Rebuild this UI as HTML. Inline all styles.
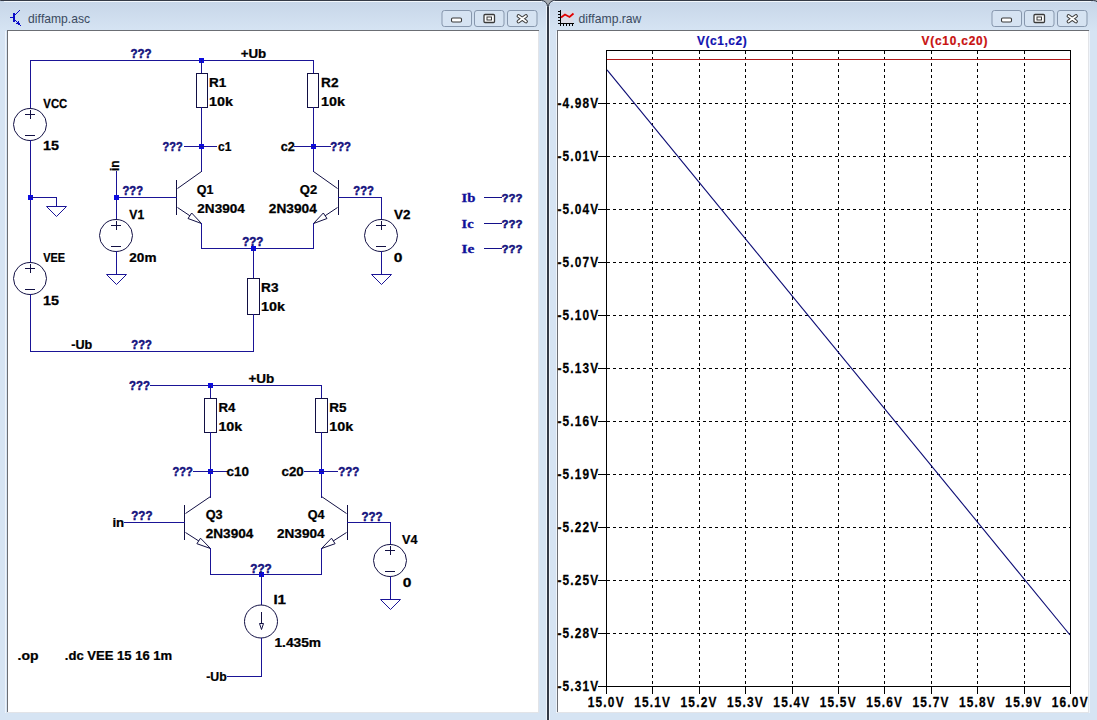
<!DOCTYPE html>
<html><head><meta charset="utf-8"><style>
html,body{margin:0;padding:0;width:1097px;height:720px;overflow:hidden;background:#d2e0f0}
svg text{font-kerning:none}
</style></head><body>
<svg width="1097" height="720" viewBox="0 0 1097 720" style="position:absolute;left:0;top:0">
<defs><linearGradient id="tg" gradientUnits="userSpaceOnUse" x1="0" y1="0" x2="0" y2="31"><stop offset="0" stop-color="#c6d5e8"/><stop offset="1" stop-color="#d6e4f3"/></linearGradient></defs>
<rect x="0" y="0" width="1097" height="720" fill="#a8acb2"/>
<rect x="-5.5" y="0.5" width="553" height="740" rx="6" fill="url(#tg)" stroke="#343a46" stroke-width="1"/>
<rect x="548.5" y="0.5" width="551" height="740" rx="6" fill="url(#tg)" stroke="#343a46" stroke-width="1"/>
<path d="M4,1.5 H542 M553,1.5 H1091" stroke="#f2f7fc" stroke-width="1"/>
<path d="M546.5,6 V720 M549.5,6 V720 M5.5,31 V713 M556.5,31 V713 M1089.5,31 V713" stroke="#eef4fb" stroke-width="1"/>
<rect x="7" y="30" width="532" height="683" fill="#ffffff"/>
<rect x="7" y="30" width="532" height="1" fill="#6b6e74"/>
<rect x="7" y="30" width="1" height="682" fill="#6b6e74"/>
<rect x="538" y="31" width="1" height="682" fill="#e2e4e8"/>
<rect x="7" y="712" width="532" height="1" fill="#e2e4e8"/>
<rect x="557" y="30" width="532" height="683" fill="#ffffff"/>
<rect x="557" y="30" width="532" height="1" fill="#6b6e74"/>
<rect x="557" y="30" width="1" height="682" fill="#6b6e74"/>
<rect x="1088" y="31" width="1" height="682" fill="#e2e4e8"/>
<rect x="557" y="712" width="532" height="1" fill="#e2e4e8"/>
<rect x="442.0" y="10.5" width="29.5" height="16" rx="2.5" fill="#d6e3f2" stroke="#8797ad" stroke-width="1"/>
<rect x="474.5" y="10.5" width="29.5" height="16" rx="2.5" fill="#d6e3f2" stroke="#8797ad" stroke-width="1"/>
<rect x="507.5" y="10.5" width="29.5" height="16" rx="2.5" fill="#d6e3f2" stroke="#8797ad" stroke-width="1"/>
<rect x="451.5" y="18" width="10" height="4" rx="1.2" fill="#fff" stroke="#3a3a3a" stroke-width="1.1"/>
<rect x="484" y="14.5" width="10.5" height="8" rx="1" fill="#fff" stroke="#3a3a3a" stroke-width="1.3"/><rect x="487" y="17" width="4.5" height="3" fill="#fff" stroke="#3a3a3a" stroke-width="1"/>
<path d="M518.5,16 L526,21.5 M526,16 L518.5,21.5" stroke="#3a3a3a" stroke-width="3.8" stroke-linecap="round"/><path d="M518.5,16 L526,21.5 M526,16 L518.5,21.5" stroke="#fff" stroke-width="1.7" stroke-linecap="round"/>
<rect x="992.0" y="10.5" width="29.5" height="16" rx="2.5" fill="#d6e3f2" stroke="#8797ad" stroke-width="1"/>
<rect x="1024.5" y="10.5" width="29.5" height="16" rx="2.5" fill="#d6e3f2" stroke="#8797ad" stroke-width="1"/>
<rect x="1057.5" y="10.5" width="29.5" height="16" rx="2.5" fill="#d6e3f2" stroke="#8797ad" stroke-width="1"/>
<rect x="1001.5" y="18" width="10" height="4" rx="1.2" fill="#fff" stroke="#3a3a3a" stroke-width="1.1"/>
<rect x="1034" y="14.5" width="10.5" height="8" rx="1" fill="#fff" stroke="#3a3a3a" stroke-width="1.3"/><rect x="1037" y="17" width="4.5" height="3" fill="#fff" stroke="#3a3a3a" stroke-width="1"/>
<path d="M1068.5,16 L1076,21.5 M1076,16 L1068.5,21.5" stroke="#3a3a3a" stroke-width="3.8" stroke-linecap="round"/><path d="M1068.5,16 L1076,21.5 M1076,16 L1068.5,21.5" stroke="#fff" stroke-width="1.7" stroke-linecap="round"/>
<text x="-0.50" y="0" transform="translate(28.60,22.70) scale(1.0093,1)" font-family="Liberation Sans" font-weight="normal" font-size="12" fill="#3a4a60">diffamp.asc</text>
<text x="-0.50" y="0" transform="translate(579.00,22.50) scale(1.0155,1)" font-family="Liberation Sans" font-weight="normal" font-size="12" fill="#3a4a60">diffamp.raw</text>
<rect x="13" y="13" width="2" height="9" fill="#0a0ac8"/>
<rect x="10" y="17" width="3" height="1" fill="#0a0ac8"/>
<rect x="15" y="14" width="1" height="1" fill="#0a0ac8"/>
<rect x="16" y="13" width="1" height="1" fill="#0a0ac8"/>
<rect x="17" y="12" width="1" height="1" fill="#0a0ac8"/>
<rect x="18" y="11" width="1" height="1" fill="#0a0ac8"/>
<rect x="19" y="10" width="1" height="1" fill="#0a0ac8"/>
<rect x="15" y="20" width="1" height="1" fill="#0a0ac8"/>
<rect x="16" y="21" width="1" height="1" fill="#0a0ac8"/>
<rect x="17" y="22" width="2" height="2" fill="#0a0ac8"/>
<rect x="18" y="23" width="2" height="2" fill="#0a0ac8"/>
<rect x="16" y="23" width="2" height="1" fill="#0a0ac8"/>
<rect x="18" y="21" width="1" height="1" fill="#0a0ac8"/>
<rect x="20" y="25" width="1" height="1" fill="#0a0ac8"/>
<rect x="561" y="11" width="12" height="12" fill="#e8d8dc" opacity="0.5"/>
<rect x="560" y="10" width="1" height="14" fill="#000"/><rect x="558" y="23" width="16" height="1" fill="#000"/>
<rect x="558" y="11" width="2" height="1" fill="#000"/>
<rect x="558" y="14" width="2" height="1" fill="#000"/>
<rect x="558" y="17" width="2" height="1" fill="#000"/>
<rect x="558" y="20" width="2" height="1" fill="#000"/>
<rect x="560" y="24" width="1" height="2" fill="#000"/>
<rect x="563" y="24" width="1" height="2" fill="#000"/>
<rect x="566" y="24" width="1" height="2" fill="#000"/>
<rect x="569" y="24" width="1" height="2" fill="#000"/>
<rect x="572" y="24" width="1" height="2" fill="#000"/>
<path d="M561,17.5 L565,14.5 L569.5,17 L573.5,13.5" fill="none" stroke="#e00000" stroke-width="1.8"/>
<rect x="30" y="60" width="284" height="1" fill="#1a1496"/>
<rect x="30" y="60" width="1" height="48" fill="#1a1496"/>
<ellipse cx="30" cy="124.5" rx="16.5" ry="16" fill="none" stroke="#121044" stroke-width="1"/>
<rect x="25" y="114" width="10" height="1" fill="#121044"/>
<rect x="30" y="110" width="1" height="9" fill="#121044"/>
<rect x="25" y="135" width="10" height="1" fill="#121044"/>
<rect x="30" y="140" width="1" height="123" fill="#1a1496"/>
<rect x="28" y="195" width="5" height="5" fill="#0c0ce0"/>
<rect x="30" y="197" width="27" height="1" fill="#1a1496"/>
<rect x="56" y="197" width="1" height="10" fill="#1a1496"/>
<polygon points="46.5,206.5 66.5,206.5 56.5,216.5" fill="none" stroke="#1a1496" stroke-width="1"/>
<ellipse cx="30" cy="278.5" rx="16.5" ry="16" fill="none" stroke="#121044" stroke-width="1"/>
<rect x="25" y="268" width="10" height="1" fill="#121044"/>
<rect x="30" y="264" width="1" height="9" fill="#121044"/>
<rect x="25" y="289" width="10" height="1" fill="#121044"/>
<rect x="30" y="294" width="1" height="58" fill="#1a1496"/>
<rect x="30" y="351" width="224" height="1" fill="#1a1496"/>
<rect x="199" y="58" width="5" height="5" fill="#0c0ce0"/>
<rect x="201" y="60" width="1" height="14" fill="#1a1496"/>
<rect x="196.5" y="73.5" width="11" height="34" fill="none" stroke="#121044" stroke-width="1"/>
<rect x="201" y="107" width="1" height="65" fill="#1a1496"/>
<rect x="199" y="144" width="5" height="5" fill="#0c0ce0"/>
<rect x="184" y="146" width="33" height="1" fill="#1a1496"/>
<rect x="313" y="60" width="1" height="14" fill="#1a1496"/>
<rect x="307.5" y="73.5" width="11" height="34" fill="none" stroke="#121044" stroke-width="1"/>
<rect x="313" y="107" width="1" height="65" fill="#1a1496"/>
<rect x="311" y="144" width="5" height="5" fill="#0c0ce0"/>
<rect x="294" y="146" width="37" height="1" fill="#1a1496"/>
<rect x="176" y="180" width="1" height="35" fill="#121044"/>
<line x1="177.5" y1="188.5" x2="201.5" y2="171.5" stroke="#121044" stroke-width="1"/>
<line x1="177.5" y1="207.5" x2="201.5" y2="223.5" stroke="#121044" stroke-width="1"/>
<polygon points="201.5,223.5 188.0,218.5 191.7,213.0" fill="#fff" stroke="#121044" stroke-width="1"/>
<rect x="116" y="197" width="61" height="1" fill="#1a1496"/>
<rect x="116" y="171" width="1" height="49" fill="#1a1496"/>
<rect x="114" y="195" width="5" height="5" fill="#0c0ce0"/>
<ellipse cx="116" cy="235.5" rx="16.5" ry="16" fill="none" stroke="#121044" stroke-width="1"/>
<rect x="111" y="225" width="10" height="1" fill="#121044"/>
<rect x="116" y="221" width="1" height="9" fill="#121044"/>
<rect x="111" y="246" width="10" height="1" fill="#121044"/>
<rect x="116" y="251" width="1" height="24" fill="#1a1496"/>
<polygon points="106.5,274.5 126.5,274.5 116.5,284.5" fill="none" stroke="#1a1496" stroke-width="1"/>
<rect x="201" y="223" width="1" height="26" fill="#1a1496"/>
<rect x="338" y="180" width="1" height="35" fill="#121044"/>
<line x1="337.5" y1="188.5" x2="313.5" y2="171.5" stroke="#121044" stroke-width="1"/>
<line x1="337.5" y1="207.5" x2="313.5" y2="223.5" stroke="#121044" stroke-width="1"/>
<polygon points="313.5,223.5 323.3,213.0 327.0,218.5" fill="#fff" stroke="#121044" stroke-width="1"/>
<rect x="338" y="197" width="44" height="1" fill="#1a1496"/>
<rect x="381" y="197" width="1" height="23" fill="#1a1496"/>
<ellipse cx="381" cy="235.5" rx="16.5" ry="16" fill="none" stroke="#121044" stroke-width="1"/>
<rect x="376" y="225" width="10" height="1" fill="#121044"/>
<rect x="381" y="221" width="1" height="9" fill="#121044"/>
<rect x="376" y="246" width="10" height="1" fill="#121044"/>
<rect x="381" y="251" width="1" height="24" fill="#1a1496"/>
<polygon points="371.5,274.5 391.5,274.5 381.5,284.5" fill="none" stroke="#1a1496" stroke-width="1"/>
<rect x="313" y="223" width="1" height="26" fill="#1a1496"/>
<rect x="201" y="248" width="113" height="1" fill="#1a1496"/>
<rect x="251" y="246" width="5" height="5" fill="#0c0ce0"/>
<rect x="253" y="248" width="1" height="31" fill="#1a1496"/>
<rect x="247.5" y="278.5" width="12" height="36" fill="none" stroke="#121044" stroke-width="1"/>
<rect x="253" y="314" width="1" height="38" fill="#1a1496"/>
<text x="-0.44" y="0" transform="translate(462.10,201.70) scale(1.1303,1)" font-family="Liberation Serif" font-weight="bold" font-size="13" fill="#10109a" stroke="#10109a" stroke-width="0.3">Ib</text>
<rect x="484" y="197" width="18" height="1" fill="#14108a"/>
<text x="-0.54" y="0" transform="translate(502.00,201.70) scale(0.9705,1)" font-family="Liberation Sans" font-weight="bold" font-size="11.8" fill="#14127e" stroke="#14127e" stroke-width="0.55">???</text>
<text x="-0.44" y="0" transform="translate(462.10,227.70) scale(1.1125,1)" font-family="Liberation Serif" font-weight="bold" font-size="13" fill="#10109a" stroke="#10109a" stroke-width="0.3">Ic</text>
<rect x="484" y="223" width="18" height="1" fill="#14108a"/>
<text x="-0.54" y="0" transform="translate(502.00,227.70) scale(0.9705,1)" font-family="Liberation Sans" font-weight="bold" font-size="11.8" fill="#14127e" stroke="#14127e" stroke-width="0.55">???</text>
<text x="-0.44" y="0" transform="translate(462.10,252.90) scale(1.1835,1)" font-family="Liberation Serif" font-weight="bold" font-size="13" fill="#10109a" stroke="#10109a" stroke-width="0.3">Ie</text>
<rect x="484" y="248" width="18" height="1" fill="#14108a"/>
<text x="-0.54" y="0" transform="translate(502.00,252.90) scale(0.9705,1)" font-family="Liberation Sans" font-weight="bold" font-size="11.8" fill="#14127e" stroke="#14127e" stroke-width="0.55">???</text>
<rect x="150" y="385" width="172" height="1" fill="#1a1496"/>
<rect x="208" y="383" width="5" height="5" fill="#0c0ce0"/>
<rect x="210" y="385" width="1" height="14" fill="#1a1496"/>
<rect x="204.5" y="398.5" width="12" height="34" fill="none" stroke="#121044" stroke-width="1"/>
<rect x="210" y="432" width="1" height="66" fill="#1a1496"/>
<rect x="208" y="469" width="5" height="5" fill="#0c0ce0"/>
<rect x="193" y="471" width="35" height="1" fill="#1a1496"/>
<rect x="321" y="385" width="1" height="14" fill="#1a1496"/>
<rect x="315.5" y="398.5" width="12" height="34" fill="none" stroke="#121044" stroke-width="1"/>
<rect x="321" y="432" width="1" height="66" fill="#1a1496"/>
<rect x="319" y="469" width="5" height="5" fill="#0c0ce0"/>
<rect x="304" y="471" width="34" height="1" fill="#1a1496"/>
<rect x="184" y="505" width="1" height="35" fill="#121044"/>
<line x1="185.5" y1="513.5" x2="210.5" y2="496.5" stroke="#121044" stroke-width="1"/>
<line x1="185.5" y1="532.5" x2="210.5" y2="548.5" stroke="#121044" stroke-width="1"/>
<polygon points="210.5,548.5 196.9,543.7 200.5,538.2" fill="#fff" stroke="#121044" stroke-width="1"/>
<rect x="124" y="522" width="61" height="1" fill="#1a1496"/>
<rect x="210" y="548" width="1" height="27" fill="#1a1496"/>
<rect x="347" y="505" width="1" height="35" fill="#121044"/>
<line x1="346.5" y1="513.5" x2="321.5" y2="496.5" stroke="#121044" stroke-width="1"/>
<line x1="346.5" y1="532.5" x2="321.5" y2="548.5" stroke="#121044" stroke-width="1"/>
<polygon points="321.5,548.5 331.5,538.2 335.1,543.7" fill="#fff" stroke="#121044" stroke-width="1"/>
<rect x="347" y="522" width="44" height="1" fill="#1a1496"/>
<rect x="390" y="522" width="1" height="23" fill="#1a1496"/>
<ellipse cx="390" cy="560.5" rx="16.5" ry="16" fill="none" stroke="#121044" stroke-width="1"/>
<rect x="385" y="550" width="10" height="1" fill="#121044"/>
<rect x="390" y="546" width="1" height="9" fill="#121044"/>
<rect x="385" y="571" width="10" height="1" fill="#121044"/>
<rect x="390" y="576" width="1" height="24" fill="#1a1496"/>
<polygon points="380.5,599.5 400.5,599.5 390.5,609.5" fill="none" stroke="#1a1496" stroke-width="1"/>
<rect x="321" y="548" width="1" height="27" fill="#1a1496"/>
<rect x="210" y="574" width="112" height="1" fill="#1a1496"/>
<rect x="259" y="572" width="5" height="5" fill="#0c0ce0"/>
<rect x="261" y="574" width="1" height="31" fill="#1a1496"/>
<ellipse cx="261" cy="621.5" rx="16.5" ry="16.5" fill="none" stroke="#121044" stroke-width="1"/>
<rect x="261" y="612" width="1" height="12" fill="#121044"/>
<polygon points="259.5,623.5 263.5,623.5 261.5,629.5" fill="#fff" stroke="#121044" stroke-width="1"/>
<rect x="261" y="638" width="1" height="39" fill="#1a1496"/>
<rect x="227" y="676" width="35" height="1" fill="#1a1496"/>
<text x="-0.09" y="0" transform="translate(43.40,107.50) scale(0.9089,1)" font-family="Liberation Sans" font-weight="bold" font-size="12.5" fill="#000" stroke="#000" stroke-width="0.25">VCC</text>
<text x="-0.79" y="0" transform="translate(43.80,150.40) scale(1.1513,1)" font-family="Liberation Sans" font-weight="bold" font-size="12.5" fill="#000" stroke="#000" stroke-width="0.25">15</text>
<text x="-0.09" y="0" transform="translate(43.30,261.60) scale(0.8757,1)" font-family="Liberation Sans" font-weight="bold" font-size="12.5" fill="#000" stroke="#000" stroke-width="0.25">VEE</text>
<text x="-0.79" y="0" transform="translate(43.80,304.80) scale(1.1513,1)" font-family="Liberation Sans" font-weight="bold" font-size="12.5" fill="#000" stroke="#000" stroke-width="0.25">15</text>
<text x="-0.52" y="0" transform="translate(241.20,57.90) scale(1.0687,1)" font-family="Liberation Sans" font-weight="bold" font-size="12.5" fill="#000" stroke="#000" stroke-width="0.25">+Ub</text>
<text x="-0.84" y="0" transform="translate(210.00,87.00) scale(1.0815,1)" font-family="Liberation Sans" font-weight="bold" font-size="12.5" fill="#000" stroke="#000" stroke-width="0.25">R1</text>
<text x="-0.79" y="0" transform="translate(210.00,106.00) scale(1.1454,1)" font-family="Liberation Sans" font-weight="bold" font-size="12.5" fill="#000" stroke="#000" stroke-width="0.25">10k</text>
<text x="-0.84" y="0" transform="translate(322.00,87.00) scale(1.0927,1)" font-family="Liberation Sans" font-weight="bold" font-size="12.5" fill="#000" stroke="#000" stroke-width="0.25">R2</text>
<text x="-0.79" y="0" transform="translate(322.00,106.00) scale(1.1454,1)" font-family="Liberation Sans" font-weight="bold" font-size="12.5" fill="#000" stroke="#000" stroke-width="0.25">10k</text>
<text x="-0.49" y="0" transform="translate(218.50,150.80) scale(0.9566,1)" font-family="Liberation Sans" font-weight="bold" font-size="12.5" fill="#000" stroke="#000" stroke-width="0.25">c1</text>
<text x="-0.49" y="0" transform="translate(281.30,150.80) scale(1.0066,1)" font-family="Liberation Sans" font-weight="bold" font-size="12.5" fill="#000" stroke="#000" stroke-width="0.25">c2</text>
<text x="-0.51" y="0" transform="translate(197.20,193.60) scale(0.9991,1)" font-family="Liberation Sans" font-weight="bold" font-size="12.5" fill="#000" stroke="#000" stroke-width="0.25">Q1</text>
<text x="-0.43" y="0" transform="translate(197.80,212.80) scale(1.0835,1)" font-family="Liberation Sans" font-weight="bold" font-size="12.5" fill="#000" stroke="#000" stroke-width="0.25">2N3904</text>
<text x="-0.51" y="0" transform="translate(300.40,193.60) scale(1.0408,1)" font-family="Liberation Sans" font-weight="bold" font-size="12.5" fill="#000" stroke="#000" stroke-width="0.25">Q2</text>
<text x="-0.43" y="0" transform="translate(269.30,212.80) scale(1.0950,1)" font-family="Liberation Sans" font-weight="bold" font-size="12.5" fill="#000" stroke="#000" stroke-width="0.25">2N3904</text>
<text x="-0.09" y="0" transform="translate(129.40,218.70) scale(0.9693,1)" font-family="Liberation Sans" font-weight="bold" font-size="12.5" fill="#000" stroke="#000" stroke-width="0.25">V1</text>
<text x="-0.43" y="0" transform="translate(129.80,261.80) scale(1.0836,1)" font-family="Liberation Sans" font-weight="bold" font-size="12.5" fill="#000" stroke="#000" stroke-width="0.25">20m</text>
<text x="-0.09" y="0" transform="translate(394.20,218.70) scale(1.0746,1)" font-family="Liberation Sans" font-weight="bold" font-size="12.5" fill="#000" stroke="#000" stroke-width="0.25">V2</text>
<text x="-0.49" y="0" transform="translate(394.30,261.70) scale(1.2448,1)" font-family="Liberation Sans" font-weight="bold" font-size="12.5" fill="#000" stroke="#000" stroke-width="0.25">0</text>
<text x="-0.84" y="0" transform="translate(262.00,292.20) scale(1.0891,1)" font-family="Liberation Sans" font-weight="bold" font-size="12.5" fill="#000" stroke="#000" stroke-width="0.25">R3</text>
<text x="-0.79" y="0" transform="translate(262.00,311.10) scale(1.1454,1)" font-family="Liberation Sans" font-weight="bold" font-size="12.5" fill="#000" stroke="#000" stroke-width="0.25">10k</text>
<text x="-0.49" y="0" transform="translate(71.75,348.75) scale(1.0089,1)" font-family="Liberation Sans" font-weight="bold" font-size="12.5" fill="#000" stroke="#000" stroke-width="0.25">-Ub</text>
<text x="0" y="0" font-family="Liberation Sans" font-weight="bold" font-size="12" fill="#000" transform="translate(119.3,171) rotate(-90)" stroke="#000" stroke-width="0.25">in</text>
<text x="-0.52" y="0" transform="translate(249.00,383.30) scale(1.0818,1)" font-family="Liberation Sans" font-weight="bold" font-size="12.5" fill="#000" stroke="#000" stroke-width="0.25">+Ub</text>
<text x="-0.84" y="0" transform="translate(219.30,412.20) scale(1.0613,1)" font-family="Liberation Sans" font-weight="bold" font-size="12.5" fill="#000" stroke="#000" stroke-width="0.25">R4</text>
<text x="-0.79" y="0" transform="translate(219.30,430.70) scale(1.1454,1)" font-family="Liberation Sans" font-weight="bold" font-size="12.5" fill="#000" stroke="#000" stroke-width="0.25">10k</text>
<text x="-0.84" y="0" transform="translate(330.20,412.00) scale(1.0815,1)" font-family="Liberation Sans" font-weight="bold" font-size="12.5" fill="#000" stroke="#000" stroke-width="0.25">R5</text>
<text x="-0.79" y="0" transform="translate(330.20,431.20) scale(1.1454,1)" font-family="Liberation Sans" font-weight="bold" font-size="12.5" fill="#000" stroke="#000" stroke-width="0.25">10k</text>
<text x="-0.49" y="0" transform="translate(227.00,475.50) scale(1.0778,1)" font-family="Liberation Sans" font-weight="bold" font-size="12.5" fill="#000" stroke="#000" stroke-width="0.25">c10</text>
<text x="-0.49" y="0" transform="translate(282.00,475.50) scale(1.0703,1)" font-family="Liberation Sans" font-weight="bold" font-size="12.5" fill="#000" stroke="#000" stroke-width="0.25">c20</text>
<text x="-0.87" y="0" transform="translate(113.30,526.70) scale(1.0570,1)" font-family="Liberation Sans" font-weight="bold" font-size="12.5" fill="#000" stroke="#000" stroke-width="0.25">in</text>
<text x="-0.51" y="0" transform="translate(206.20,518.60) scale(1.0184,1)" font-family="Liberation Sans" font-weight="bold" font-size="12.5" fill="#000" stroke="#000" stroke-width="0.25">Q3</text>
<text x="-0.43" y="0" transform="translate(206.20,538.20) scale(1.0881,1)" font-family="Liberation Sans" font-weight="bold" font-size="12.5" fill="#000" stroke="#000" stroke-width="0.25">2N3904</text>
<text x="-0.51" y="0" transform="translate(308.25,518.80) scale(1.0096,1)" font-family="Liberation Sans" font-weight="bold" font-size="12.5" fill="#000" stroke="#000" stroke-width="0.25">Q4</text>
<text x="-0.43" y="0" transform="translate(277.50,538.20) scale(1.0858,1)" font-family="Liberation Sans" font-weight="bold" font-size="12.5" fill="#000" stroke="#000" stroke-width="0.25">2N3904</text>
<text x="-0.09" y="0" transform="translate(402.20,543.90) scale(1.0108,1)" font-family="Liberation Sans" font-weight="bold" font-size="12.5" fill="#000" stroke="#000" stroke-width="0.25">V4</text>
<text x="-0.49" y="0" transform="translate(403.30,586.70) scale(1.2448,1)" font-family="Liberation Sans" font-weight="bold" font-size="12.5" fill="#000" stroke="#000" stroke-width="0.25">0</text>
<text x="-0.84" y="0" transform="translate(274.40,604.20) scale(1.2120,1)" font-family="Liberation Sans" font-weight="bold" font-size="12.5" fill="#000" stroke="#000" stroke-width="0.25">I1</text>
<text x="-0.79" y="0" transform="translate(275.30,647.20) scale(1.1021,1)" font-family="Liberation Sans" font-weight="bold" font-size="12.5" fill="#000" stroke="#000" stroke-width="0.25">1.435m</text>
<text x="-0.49" y="0" transform="translate(206.70,680.70) scale(0.9836,1)" font-family="Liberation Sans" font-weight="bold" font-size="12.5" fill="#000" stroke="#000" stroke-width="0.25">-Ub</text>
<text x="-0.85" y="0" transform="translate(18.50,660.00) scale(1.1160,1)" font-family="Liberation Sans" font-weight="bold" font-size="12.5" fill="#000" stroke="#000" stroke-width="0.25">.op</text>
<text x="-0.85" y="0" transform="translate(65.70,660.00) scale(1.0453,1)" font-family="Liberation Sans" font-weight="bold" font-size="12.5" fill="#000" stroke="#000" stroke-width="0.25">.dc VEE 15 16 1m</text>
<text x="-0.56" y="0" transform="translate(131.00,58.20) scale(0.9404,1)" font-family="Liberation Sans" font-weight="bold" font-size="12.3" fill="#14127e" stroke="#14127e" stroke-width="0.5">???</text>
<text x="-0.56" y="0" transform="translate(163.00,151.20) scale(0.8934,1)" font-family="Liberation Sans" font-weight="bold" font-size="12.3" fill="#14127e" stroke="#14127e" stroke-width="0.5">???</text>
<text x="-0.56" y="0" transform="translate(123.00,194.70) scale(0.9122,1)" font-family="Liberation Sans" font-weight="bold" font-size="12.3" fill="#14127e" stroke="#14127e" stroke-width="0.5">???</text>
<text x="-0.56" y="0" transform="translate(330.70,151.20) scale(0.9263,1)" font-family="Liberation Sans" font-weight="bold" font-size="12.3" fill="#14127e" stroke="#14127e" stroke-width="0.5">???</text>
<text x="-0.56" y="0" transform="translate(353.80,194.70) scale(0.9169,1)" font-family="Liberation Sans" font-weight="bold" font-size="12.3" fill="#14127e" stroke="#14127e" stroke-width="0.5">???</text>
<text x="-0.56" y="0" transform="translate(242.70,245.70) scale(0.9404,1)" font-family="Liberation Sans" font-weight="bold" font-size="12.3" fill="#14127e" stroke="#14127e" stroke-width="0.5">???</text>
<text x="-0.56" y="0" transform="translate(131.75,349.45) scale(0.9169,1)" font-family="Liberation Sans" font-weight="bold" font-size="12.3" fill="#14127e" stroke="#14127e" stroke-width="0.5">???</text>
<text x="-0.56" y="0" transform="translate(129.50,390.20) scale(0.9310,1)" font-family="Liberation Sans" font-weight="bold" font-size="12.3" fill="#14127e" stroke="#14127e" stroke-width="0.5">???</text>
<text x="-0.56" y="0" transform="translate(172.90,476.20) scale(0.9075,1)" font-family="Liberation Sans" font-weight="bold" font-size="12.3" fill="#14127e" stroke="#14127e" stroke-width="0.5">???</text>
<text x="-0.56" y="0" transform="translate(131.80,520.30) scale(0.9404,1)" font-family="Liberation Sans" font-weight="bold" font-size="12.3" fill="#14127e" stroke="#14127e" stroke-width="0.5">???</text>
<text x="-0.56" y="0" transform="translate(338.75,476.20) scale(0.9404,1)" font-family="Liberation Sans" font-weight="bold" font-size="12.3" fill="#14127e" stroke="#14127e" stroke-width="0.5">???</text>
<text x="-0.56" y="0" transform="translate(362.00,520.70) scale(0.9404,1)" font-family="Liberation Sans" font-weight="bold" font-size="12.3" fill="#14127e" stroke="#14127e" stroke-width="0.5">???</text>
<text x="-0.56" y="0" transform="translate(250.80,572.90) scale(0.9545,1)" font-family="Liberation Sans" font-weight="bold" font-size="12.3" fill="#14127e" stroke="#14127e" stroke-width="0.5">???</text>
<line x1="652.5" y1="51" x2="652.5" y2="686" stroke="#000" stroke-width="1" stroke-dasharray="3,3"/>
<line x1="699.5" y1="51" x2="699.5" y2="686" stroke="#000" stroke-width="1" stroke-dasharray="3,3"/>
<line x1="745.5" y1="51" x2="745.5" y2="686" stroke="#000" stroke-width="1" stroke-dasharray="3,3"/>
<line x1="792.5" y1="51" x2="792.5" y2="686" stroke="#000" stroke-width="1" stroke-dasharray="3,3"/>
<line x1="838.5" y1="51" x2="838.5" y2="686" stroke="#000" stroke-width="1" stroke-dasharray="3,3"/>
<line x1="884.5" y1="51" x2="884.5" y2="686" stroke="#000" stroke-width="1" stroke-dasharray="3,3"/>
<line x1="931.5" y1="51" x2="931.5" y2="686" stroke="#000" stroke-width="1" stroke-dasharray="3,3"/>
<line x1="977.5" y1="51" x2="977.5" y2="686" stroke="#000" stroke-width="1" stroke-dasharray="3,3"/>
<line x1="1024.5" y1="51" x2="1024.5" y2="686" stroke="#000" stroke-width="1" stroke-dasharray="3,3"/>
<line x1="607" y1="103.5" x2="1070" y2="103.5" stroke="#000" stroke-width="1" stroke-dasharray="3,3"/>
<line x1="607" y1="156.5" x2="1070" y2="156.5" stroke="#000" stroke-width="1" stroke-dasharray="3,3"/>
<line x1="607" y1="209.5" x2="1070" y2="209.5" stroke="#000" stroke-width="1" stroke-dasharray="3,3"/>
<line x1="607" y1="262.5" x2="1070" y2="262.5" stroke="#000" stroke-width="1" stroke-dasharray="3,3"/>
<line x1="607" y1="315.5" x2="1070" y2="315.5" stroke="#000" stroke-width="1" stroke-dasharray="3,3"/>
<line x1="607" y1="368.5" x2="1070" y2="368.5" stroke="#000" stroke-width="1" stroke-dasharray="3,3"/>
<line x1="607" y1="421.5" x2="1070" y2="421.5" stroke="#000" stroke-width="1" stroke-dasharray="3,3"/>
<line x1="607" y1="474.5" x2="1070" y2="474.5" stroke="#000" stroke-width="1" stroke-dasharray="3,3"/>
<line x1="607" y1="527.5" x2="1070" y2="527.5" stroke="#000" stroke-width="1" stroke-dasharray="3,3"/>
<line x1="607" y1="580.5" x2="1070" y2="580.5" stroke="#000" stroke-width="1" stroke-dasharray="3,3"/>
<line x1="607" y1="633.5" x2="1070" y2="633.5" stroke="#000" stroke-width="1" stroke-dasharray="3,3"/>
<rect x="606.5" y="50.5" width="464" height="636" fill="none" stroke="#000" stroke-width="1"/>
<rect x="606" y="686" width="1" height="8" fill="#000"/>
<rect x="652" y="686" width="1" height="8" fill="#000"/>
<rect x="699" y="686" width="1" height="8" fill="#000"/>
<rect x="745" y="686" width="1" height="8" fill="#000"/>
<rect x="792" y="686" width="1" height="8" fill="#000"/>
<rect x="838" y="686" width="1" height="8" fill="#000"/>
<rect x="884" y="686" width="1" height="8" fill="#000"/>
<rect x="931" y="686" width="1" height="8" fill="#000"/>
<rect x="977" y="686" width="1" height="8" fill="#000"/>
<rect x="1024" y="686" width="1" height="8" fill="#000"/>
<rect x="1070" y="686" width="1" height="8" fill="#000"/>
<rect x="598" y="103" width="9" height="1" fill="#000"/>
<rect x="598" y="156" width="9" height="1" fill="#000"/>
<rect x="598" y="209" width="9" height="1" fill="#000"/>
<rect x="598" y="262" width="9" height="1" fill="#000"/>
<rect x="598" y="315" width="9" height="1" fill="#000"/>
<rect x="598" y="368" width="9" height="1" fill="#000"/>
<rect x="598" y="421" width="9" height="1" fill="#000"/>
<rect x="598" y="474" width="9" height="1" fill="#000"/>
<rect x="598" y="527" width="9" height="1" fill="#000"/>
<rect x="598" y="580" width="9" height="1" fill="#000"/>
<rect x="598" y="633" width="9" height="1" fill="#000"/>
<rect x="598" y="686" width="9" height="1" fill="#000"/>
<line x1="607" y1="59.5" x2="1070" y2="59.5" stroke="#b01818" stroke-width="1.1"/>
<line x1="607" y1="69.8" x2="1070" y2="635" stroke="#0a0a74" stroke-width="1.1"/>
<text x="-0.09" y="0" transform="translate(697.00,44.70) scale(0.8800,1)" font-family="Liberation Sans" font-weight="bold" font-size="13.5" fill="#1010b0" stroke="#1010b0" stroke-width="0.25" letter-spacing="0.699">V(c1,c2)</text>
<text x="-0.09" y="0" transform="translate(921.50,44.70) scale(0.8800,1)" font-family="Liberation Sans" font-weight="bold" font-size="13.5" fill="#c81010" stroke="#c81010" stroke-width="0.25" letter-spacing="0.921">V(c10,c20)</text>
<text x="-0.57" y="0" transform="translate(558.00,108.00) scale(0.8200,1)" font-family="Liberation Sans" font-weight="bold" font-size="14.5" fill="#000" stroke="#000" stroke-width="0.25" letter-spacing="1.345">-4.98V</text>
<text x="-0.57" y="0" transform="translate(558.00,161.00) scale(0.8200,1)" font-family="Liberation Sans" font-weight="bold" font-size="14.5" fill="#000" stroke="#000" stroke-width="0.25" letter-spacing="1.345">-5.01V</text>
<text x="-0.57" y="0" transform="translate(558.00,214.00) scale(0.8200,1)" font-family="Liberation Sans" font-weight="bold" font-size="14.5" fill="#000" stroke="#000" stroke-width="0.25" letter-spacing="1.345">-5.04V</text>
<text x="-0.57" y="0" transform="translate(558.00,267.00) scale(0.8200,1)" font-family="Liberation Sans" font-weight="bold" font-size="14.5" fill="#000" stroke="#000" stroke-width="0.25" letter-spacing="1.345">-5.07V</text>
<text x="-0.57" y="0" transform="translate(558.00,320.00) scale(0.8200,1)" font-family="Liberation Sans" font-weight="bold" font-size="14.5" fill="#000" stroke="#000" stroke-width="0.25" letter-spacing="1.345">-5.10V</text>
<text x="-0.57" y="0" transform="translate(558.00,373.00) scale(0.8200,1)" font-family="Liberation Sans" font-weight="bold" font-size="14.5" fill="#000" stroke="#000" stroke-width="0.25" letter-spacing="1.345">-5.13V</text>
<text x="-0.57" y="0" transform="translate(558.00,426.00) scale(0.8200,1)" font-family="Liberation Sans" font-weight="bold" font-size="14.5" fill="#000" stroke="#000" stroke-width="0.25" letter-spacing="1.345">-5.16V</text>
<text x="-0.57" y="0" transform="translate(558.00,479.00) scale(0.8200,1)" font-family="Liberation Sans" font-weight="bold" font-size="14.5" fill="#000" stroke="#000" stroke-width="0.25" letter-spacing="1.345">-5.19V</text>
<text x="-0.57" y="0" transform="translate(558.00,532.00) scale(0.8200,1)" font-family="Liberation Sans" font-weight="bold" font-size="14.5" fill="#000" stroke="#000" stroke-width="0.25" letter-spacing="1.345">-5.22V</text>
<text x="-0.57" y="0" transform="translate(558.00,585.00) scale(0.8200,1)" font-family="Liberation Sans" font-weight="bold" font-size="14.5" fill="#000" stroke="#000" stroke-width="0.25" letter-spacing="1.345">-5.25V</text>
<text x="-0.57" y="0" transform="translate(558.00,638.00) scale(0.8200,1)" font-family="Liberation Sans" font-weight="bold" font-size="14.5" fill="#000" stroke="#000" stroke-width="0.25" letter-spacing="1.345">-5.28V</text>
<text x="-0.57" y="0" transform="translate(558.00,691.00) scale(0.8200,1)" font-family="Liberation Sans" font-weight="bold" font-size="14.5" fill="#000" stroke="#000" stroke-width="0.25" letter-spacing="1.345">-5.31V</text>
<text x="-0.91" y="0" transform="translate(588.50,706.80) scale(0.8200,1)" font-family="Liberation Sans" font-weight="bold" font-size="14.5" fill="#000" stroke="#000" stroke-width="0.25" letter-spacing="1.451">15.0V</text>
<text x="-0.91" y="0" transform="translate(634.90,706.80) scale(0.8200,1)" font-family="Liberation Sans" font-weight="bold" font-size="14.5" fill="#000" stroke="#000" stroke-width="0.25" letter-spacing="1.451">15.1V</text>
<text x="-0.91" y="0" transform="translate(681.30,706.80) scale(0.8200,1)" font-family="Liberation Sans" font-weight="bold" font-size="14.5" fill="#000" stroke="#000" stroke-width="0.25" letter-spacing="1.451">15.2V</text>
<text x="-0.91" y="0" transform="translate(727.70,706.80) scale(0.8200,1)" font-family="Liberation Sans" font-weight="bold" font-size="14.5" fill="#000" stroke="#000" stroke-width="0.25" letter-spacing="1.451">15.3V</text>
<text x="-0.91" y="0" transform="translate(774.10,706.80) scale(0.8200,1)" font-family="Liberation Sans" font-weight="bold" font-size="14.5" fill="#000" stroke="#000" stroke-width="0.25" letter-spacing="1.451">15.4V</text>
<text x="-0.91" y="0" transform="translate(820.50,706.80) scale(0.8200,1)" font-family="Liberation Sans" font-weight="bold" font-size="14.5" fill="#000" stroke="#000" stroke-width="0.25" letter-spacing="1.451">15.5V</text>
<text x="-0.91" y="0" transform="translate(866.90,706.80) scale(0.8200,1)" font-family="Liberation Sans" font-weight="bold" font-size="14.5" fill="#000" stroke="#000" stroke-width="0.25" letter-spacing="1.451">15.6V</text>
<text x="-0.91" y="0" transform="translate(913.30,706.80) scale(0.8200,1)" font-family="Liberation Sans" font-weight="bold" font-size="14.5" fill="#000" stroke="#000" stroke-width="0.25" letter-spacing="1.451">15.7V</text>
<text x="-0.91" y="0" transform="translate(959.70,706.80) scale(0.8200,1)" font-family="Liberation Sans" font-weight="bold" font-size="14.5" fill="#000" stroke="#000" stroke-width="0.25" letter-spacing="1.451">15.8V</text>
<text x="-0.91" y="0" transform="translate(1006.10,706.80) scale(0.8200,1)" font-family="Liberation Sans" font-weight="bold" font-size="14.5" fill="#000" stroke="#000" stroke-width="0.25" letter-spacing="1.451">15.9V</text>
<text x="-0.91" y="0" transform="translate(1052.50,706.80) scale(0.8200,1)" font-family="Liberation Sans" font-weight="bold" font-size="14.5" fill="#000" stroke="#000" stroke-width="0.25" letter-spacing="1.451">16.0V</text>
</svg>
</body></html>
